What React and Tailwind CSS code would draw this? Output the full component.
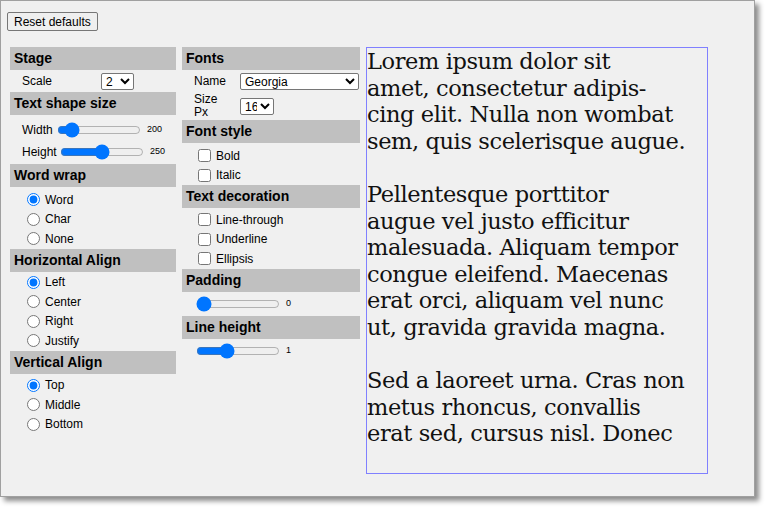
export default function App() {
  const Head = ({ children }) => (
    <div className="h-[23px] bg-[#c0c0c0] px-[4px] flex items-center text-[14px] font-bold text-black">{children}</div>
  );
  const Radio = ({ label, checked, name }) => (
    <label className="flex items-center h-[19.5px] pl-[17px] gap-[5px] text-[12px]">
      <input type="radio" name={name} defaultChecked={checked} className="m-0 w-[13px] h-[13px] accent-[#0075ff]" />
      {label}
    </label>
  );
  const Check = ({ label }) => (
    <label className="flex items-center h-[19.5px] pl-[16px] gap-[5px] text-[12px]">
      <input type="checkbox" className="m-0 w-[13px] h-[13px]" />
      {label}
    </label>
  );
  const Slider = ({ label, value, max, pos, lw }) => (
    <div className="flex items-center h-[22px] text-[12px]">
      <span className={`${lw} pl-[12px]`}>{label}</span>
      <input type="range" min="0" max={max} defaultValue={pos} className="w-[84px] h-[14px] accent-[#0075ff] m-0" />
      <span className="ml-[6px] text-[9px]">{value}</span>
    </div>
  );
  const lines = [
    'Lorem ipsum dolor sit', 'amet, consectetur adipis-', 'cing elit. Nulla non wombat', 'sem, quis scelerisque augue.', '',
    'Pellentesque porttitor', 'augue vel justo efficitur', 'malesuada. Aliquam tempor', 'congue eleifend. Maecenas', 'erat orci, aliquam vel nunc', 'ut, gravida gravida magna.', '',
    'Sed a laoreet urna. Cras non', 'metus rhoncus, convallis', 'erat sed, cursus nisl. Donec',
  ];
  return (
    <div className="w-[768px] h-[511px] bg-white font-[Liberation_Sans,Arial,sans-serif] text-black">
      <div className="w-[755px] h-[497px] bg-[#f0f0f0] border border-[#a0a0a0] shadow-[4px_4px_5px_rgba(0,0,0,0.45)] relative">
        <div className="pt-[8px] pl-[6px]">
          <button className="h-[19px] px-[6px] text-[12px] border border-[#767676] rounded-[2px] bg-[#efefef]">Reset defaults</button>
        </div>
        <div className="flex pl-[9px] pt-[14px] gap-[6px]">
          <div className="w-[166px]">
            <Head>Stage</Head>
            <div className="flex items-center h-[22px] text-[12px]">
              <span className="w-[91px] pl-[12px]">Scale</span>
              <select className="h-[17px] w-[33px] text-[12px] bg-white border border-[#767676] rounded-[2px]"><option>2</option></select>
            </div>
            <Head>Text shape size</Head>
            <div className="h-[4px]" />
            <Slider label="Width" value="200" max="1000" pos="100" lw="w-[47px]" />
            <Slider label="Height" value="250" max="400" pos="200" lw="w-[50px]" />
            <div className="h-[1px]" />
            <Head>Word wrap</Head>
            <div className="h-[3px]" />
            <Radio name="ww" label="Word" checked />
            <Radio name="ww" label="Char" />
            <Radio name="ww" label="None" />
            <Head>Horizontal Align</Head>
            <div className="h-[1px]" />
            <Radio name="ha" label="Left" checked />
            <Radio name="ha" label="Center" />
            <Radio name="ha" label="Right" />
            <Radio name="ha" label="Justify" />
            <Head>Vertical Align</Head>
            <div className="h-[2px]" />
            <Radio name="va" label="Top" checked />
            <Radio name="va" label="Middle" />
            <Radio name="va" label="Bottom" />
          </div>
          <div className="w-[178px]">
            <Head>Fonts</Head>
            <div className="flex items-center h-[22px] text-[12px]">
              <span className="w-[58px] pl-[12px]">Name</span>
              <select className="h-[17px] w-[119px] text-[12px] bg-white border border-[#767676] rounded-[2px]"><option>Georgia</option></select>
            </div>
            <div className="flex items-center h-[28px] text-[12px]">
              <span className="w-[58px] pl-[12px] leading-[13px]">Size<br />Px</span>
              <select className="h-[17px] w-[34px] text-[12px] bg-white border border-[#767676] rounded-[2px]"><option>16</option></select>
            </div>
            <Head>Font style</Head>
            <div className="h-[3px]" />
            <Check label="Bold" />
            <Check label="Italic" />
            <Head>Text decoration</Head>
            <div className="h-[2px]" />
            <Check label="Line-through" />
            <Check label="Underline" />
            <Check label="Ellipsis" />
            <Head>Padding</Head>
            <div className="flex items-center h-[24px] pl-[14px]">
              <input type="range" min="0" max="100" defaultValue="0" className="w-[84px] h-[14px] accent-[#0075ff] m-0" />
              <span className="ml-[6px] text-[9px]">0</span>
            </div>
            <Head>Line height</Head>
            <div className="flex items-center h-[24px] pl-[14px]">
              <input type="range" min="0" max="3" step="0.1" defaultValue="1" className="w-[84px] h-[14px] accent-[#0075ff] m-0" />
              <span className="ml-[6px] text-[9px]">1</span>
            </div>
          </div>
          <div className="w-[342px] h-[427px] border border-[#8080ff] overflow-hidden font-[DejaVu_Serif,serif] text-[22.5px] leading-[26.6px] tracking-[-0.4px] text-[#111]">
            {lines.map((l, i) => (
              <div key={i} className="whitespace-nowrap h-[26.6px]">{l}</div>
            ))}
          </div>
        </div>
      </div>
    </div>
  );
}
